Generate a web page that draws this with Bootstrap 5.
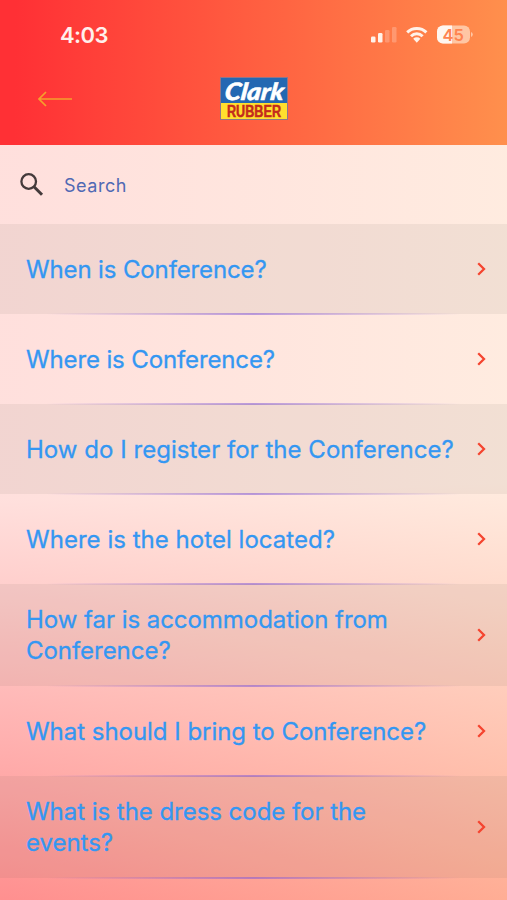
<!DOCTYPE html>
<html lang="en">
<head>
<meta charset="utf-8">
<meta name="viewport" content="width=device-width, initial-scale=1">
<title>Conference FAQ</title>
<link href="https://cdn.jsdelivr.net/npm/bootstrap@5.3.0/dist/css/bootstrap.min.css" rel="stylesheet">
<style>
body{font-family:Inter,"Liberation Sans",sans-serif;background:#ff6040;overflow:hidden}
.screen{height:900px;background:linear-gradient(90.500deg,#ff3035 3%,#ff914d 100%)}
.top-area{height:145px}
.status-bar{height:70px;padding:0 36px 0 60px}
.clock{font-size:22px;font-weight:600;color:#fff0ec;letter-spacing:-.6px}
.title-bar{height:75px;display:grid;grid-template-columns:1fr auto 1fr;padding:7px 38px 0}
.back-arrow{margin-top:13px}
.sheet{height:755px;background:linear-gradient(178deg,rgba(255,248,244,.88) 0,rgba(255,248,244,.88) 46%,rgba(255,217,214,.76) 77%,rgba(255,188,185,.66) 100%)}
.search-row{height:79px;padding-left:19px}
.search-row input{font-size:18px;letter-spacing:.55px;color:#5069b4;width:300px;outline:0;padding:2px 0 0 4px}
.search-row input::placeholder{color:#5069b4;opacity:1}
.faq-item{height:90px;padding:0 20px 0 26px;font-size:24px;line-height:31px;letter-spacing:-.13px;color:#3497f2;-webkit-text-stroke:.3px #3497f2;position:relative}
.faq-item:hover{color:#3497f2}
.faq-item.tall{height:102px}
.faq-item.even-set{letter-spacing:.03px}
.faq-item.tall{letter-spacing:-.04px}
.faq-item.open-set{letter-spacing:-.03px}
.faq-item:nth-child(odd){background:rgba(90,90,80,.08)}
.faq-item::after{content:"";position:absolute;left:46px;right:46px;bottom:-.5px;height:2px;background:linear-gradient(90deg,rgba(130,90,215,0),rgba(130,90,215,.55) 50%,rgba(130,90,215,0))}
.faq-item svg{flex:none;margin-top:-1px}
.faq-item .q{max-width:440px;white-space:nowrap}
.faq-item.tall .q{max-width:375px;white-space:normal}
.brand-top{font:italic 900 24px Lato,sans-serif}
.brand-bottom{font:700 16px "Liberation Sans",sans-serif}
</style>
<script src="https://cdn.jsdelivr.net/npm/bootstrap@5.3.0/dist/js/bootstrap.bundle.min.js"></script>
</head>
<body>
<div class="screen">
  <header class="top-area">
    <div class="status-bar d-flex justify-content-between align-items-center">
      <span class="clock">4:03</span>
      <svg width="104" height="24" viewBox="367 23 104 24" overflow="visible">
        <g fill="#fff2ea"><rect x="371" y="36.500" width="4.500" height="6" rx="1.300"/><rect x="378" y="33" width="4.500" height="9.500" rx="1.300"/><g opacity=".25"><rect x="385" y="30" width="4.500" height="12.500" rx="1.300"/><rect x="392" y="27" width="4.500" height="15.500" rx="1.300"/></g></g>
        <g fill="none" stroke="#fff2ea" stroke-width="3"><path d="M407.200 32.300a13.800 13.800 0 0 1 19.200 0"/><path d="M411 36.200a8.300 8.300 0 0 1 11.600 0"/></g>
        <path d="M413.200 38.800a5.200 5.200 0 0 1 7.200 0l-3.600 3.900z" fill="#fff2ea"/>
        <clipPath id="charge"><rect x="437" y="25" width="15" height="19"/></clipPath>
        <rect x="437" y="25.500" width="33" height="18" rx="6" fill="#ffc6a4"/>
        <rect x="437" y="25.500" width="33" height="18" rx="6" fill="#fff6f0" clip-path="url(#charge)"/>
        <path d="M471 32v5q1.800-.8 1.800-2.500t-1.800-2.500z" fill="#ffc6a4"/>
        <text x="453.300" y="40.500" text-anchor="middle" font-family="Inter" font-size="16.500" font-weight="600" fill="#ff8350">45</text>
      </svg>
    </div>
    <div class="title-bar align-items-start">
      <svg class="back-arrow" width="34" height="18" viewBox="0 0 34 18" fill="none" stroke="#f5a02c" stroke-width="1.700"><path d="M1 9H34M8 2L1 9l7 7"/></svg>
      <svg width="68" height="43" viewBox="0 0 68 43" overflow="visible">
        <rect x=".5" y=".5" width="67" height="42" fill="#2468b2" stroke="#8f7588"/>
        <rect x="1" y="26" width="66" height="16" fill="#ffdf2e"/>
        <text class="brand-top" transform="translate(4 22.800) skewX(-7)" fill="#fff" stroke="#fff" stroke-width=".5" textLength="59" lengthAdjust="spacingAndGlyphs">Clark</text>
        <text class="brand-bottom" x="7" y="39.800" fill="#c32a1d" stroke="#c32a1d" stroke-width=".5" textLength="54" lengthAdjust="spacingAndGlyphs">RUBBER</text>
      </svg>
    </div>
  </header>
  <main class="sheet">
    <div class="search-row d-flex align-items-center">
      <svg width="25" height="25" viewBox="0 0 25 25" fill="none" stroke="#443a3b"><circle cx="9.700" cy="9.500" r="7.300" stroke-width="2.300"/><path d="M15 14.800l8 8" stroke-width="3"/></svg>
      <input class="border-0 bg-transparent ms-3" type="text" placeholder="Search" aria-label="Search">
    </div>
    <div class="faq-list">
      <a class="faq-item d-flex align-items-center justify-content-between text-decoration-none" href="#"><span class="q">When is Conference?</span><svg width="11" height="16" viewBox="0 0 11 16" fill="none" stroke="#f5442f" stroke-width="2.300"><path d="M2.200 2.200L8 8l-5.800 5.800"/></svg></a>
      <a class="faq-item d-flex align-items-center justify-content-between text-decoration-none" href="#"><span class="q">Where is Conference?</span><svg width="11" height="16" viewBox="0 0 11 16" fill="none" stroke="#f5442f" stroke-width="2.300"><path d="M2.200 2.200L8 8l-5.800 5.800"/></svg></a>
      <a class="faq-item even-set d-flex align-items-center justify-content-between text-decoration-none" href="#"><span class="q">How do I register for the Conference?</span><svg width="11" height="16" viewBox="0 0 11 16" fill="none" stroke="#f5442f" stroke-width="2.300"><path d="M2.200 2.200L8 8l-5.800 5.800"/></svg></a>
      <a class="faq-item even-set d-flex align-items-center justify-content-between text-decoration-none" href="#"><span class="q">Where is the hotel located?</span><svg width="11" height="16" viewBox="0 0 11 16" fill="none" stroke="#f5442f" stroke-width="2.300"><path d="M2.200 2.200L8 8l-5.800 5.800"/></svg></a>
      <a class="faq-item tall d-flex align-items-center justify-content-between text-decoration-none" href="#"><span class="q">How far is accommodation from Conference?</span><svg width="11" height="16" viewBox="0 0 11 16" fill="none" stroke="#f5442f" stroke-width="2.300"><path d="M2.200 2.200L8 8l-5.800 5.800"/></svg></a>
      <a class="faq-item open-set d-flex align-items-center justify-content-between text-decoration-none" href="#"><span class="q">What should I bring to Conference?</span><svg width="11" height="16" viewBox="0 0 11 16" fill="none" stroke="#f5442f" stroke-width="2.300"><path d="M2.200 2.200L8 8l-5.800 5.800"/></svg></a>
      <a class="faq-item tall even-set d-flex align-items-center justify-content-between text-decoration-none" href="#"><span class="q">What is the dress code for the events?</span><svg width="11" height="16" viewBox="0 0 11 16" fill="none" stroke="#f5442f" stroke-width="2.300"><path d="M2.200 2.200L8 8l-5.800 5.800"/></svg></a>
    </div>
  </main>
</div>
</body>
</html>
